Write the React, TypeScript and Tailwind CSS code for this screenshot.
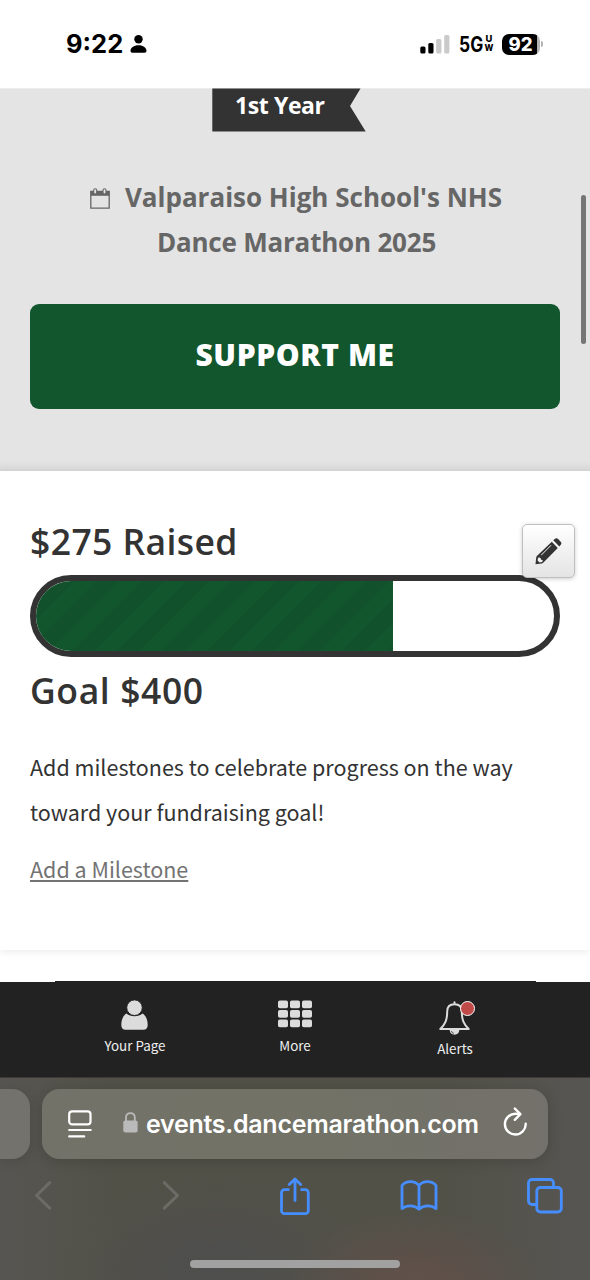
import React from 'react';

const campaign = {
  badge: '1st Year',
  event: ["Valparaiso High School's NHS", 'Dance Marathon 2025'],
  raised: 275,
  goal: 400,
};

function StatusBar() {
  return (
    <header className="flex h-[88px] shrink-0 items-center justify-between bg-white pr-[47px] pl-[66px] font-[Inter,sans-serif] text-black">
      <div className="flex items-center gap-[7px]">
        <span className="text-[25.5px] leading-none font-bold">9:22</span>
        <svg width="17" height="18" viewBox="0 0 17 18" fill="currentColor">
          <circle cx="8.5" cy="4.3" r="4.2" />
          <path d="M8.5 10.2c4.8 0 8 2.7 8 5.6 0 1.3-.7 2-2 2h-12c-1.3 0-2-.7-2-2 0-2.9 3.2-5.6 8-5.6z" />
        </svg>
      </div>
      <div className="flex items-center">
        <svg width="30" height="19" viewBox="0 0 30 19">
          <rect x="0.3" y="11.5" width="5.2" height="7" rx="1.5" />
          <rect x="8.3" y="8" width="5.2" height="10.5" rx="1.5" />
          <rect x="16.2" y="4" width="5.2" height="14.5" rx="1.5" fill="#cacaca" />
          <rect x="24.2" y="0" width="5.2" height="18.5" rx="1.5" fill="#cacaca" />
        </svg>
        <span className="ml-[9px] flex items-center">
          <span className="w-[25px] text-[21px] leading-none">
            <span className="inline-block origin-left scale-x-[0.83] font-bold">5G</span>
          </span>
          <span className="flex w-[10px] flex-col items-center text-[9.3px] leading-[8.6px] font-extrabold">
            <span>U</span>
            <span className="scale-x-90">W</span>
          </span>
        </span>
        <span className="ml-[8px] flex items-center">
          <span className="flex h-[21px] w-[38px] items-center justify-center rounded-[7px] bg-[linear-gradient(to_right,#000_35px,#b3b3b3_35px)] pr-[1px] text-[18.5px] leading-none font-extrabold text-white">
            92
          </span>
          <span className="ml-[1px] h-[6px] w-[2px] rounded-r-full bg-[#b3b3b3]" />
        </span>
      </div>
    </header>
  );
}

function CalendarIcon() {
  return (
    <svg width="20" height="22" viewBox="0 0 20 22" fill="none" className="mr-[15px] mb-px inline-block">
      <path d="M.8 3.5h18.4v16.7H.8z" stroke="#666" strokeWidth="1.3" />
      <path d="M.5 3h19v4.8H.5z" fill="#666" />
      <rect x="3.7" y=".7" width="3" height="5.3" rx="1.5" fill="#e4e4e4" stroke="#666" strokeWidth="1.1" />
      <rect x="13" y=".7" width="3" height="5.3" rx="1.5" fill="#e4e4e4" stroke="#666" strokeWidth="1.1" />
    </svg>
  );
}

function Hero() {
  return (
    <section className="relative flex h-[383px] shrink-0 flex-col items-center bg-[#e4e4e4] font-['Open_Sans',sans-serif]">
      <div className="absolute inset-x-0 bottom-0 h-[10px] bg-linear-to-t from-black/6 to-transparent" />
      <div className="h-px w-full bg-[#ededed]" />
      <div className="relative -mt-px mr-[12px] h-[43.5px] w-[154px] shrink-0">
        <svg className="absolute inset-0" width="154" height="44" viewBox="0 0 154 44">
          <path d="M.3 .5h148.200L138 18l15.700 25.500H.3z" fill="#333" />
        </svg>
        <div className="relative pl-[23px] text-[23px] leading-[34px] font-bold tracking-[-0.4px] text-white">{campaign.badge}</div>
      </div>
      <h2 className="mt-[43px] text-center text-[26px] leading-[45px] font-bold whitespace-nowrap text-[#666]">
        <span className="block pl-[2px]">
          <CalendarIcon />
          {campaign.event[0]}
        </span>
        <span className="block pl-[3px] tracking-[-0.2px]">{campaign.event[1]}</span>
      </h2>
      <button className="mt-[39.5px] h-[105px] w-[530px] shrink-0 rounded-[9px] bg-[#12562d] pb-[4px] text-[30px] font-extrabold tracking-[0.6px] text-white">
        SUPPORT ME
      </button>
    </section>
  );
}

function PencilIcon() {
  return (
    <svg width="27" height="27" viewBox="0 0 27 27" fill="#333">
      <path d="M18.300 2.200 20 .8c1-.8 2.200-.7 3.100.2l2.600 2.700c.9.9.9 2 .1 3l-1.500 1.700z" />
      <path d="m16.800 3.800 6 6.100L8.700 24.200c-.6.600-1.100 1.100-2 1.200L.5 26.200l.7-6.700c.1-.6.300-1 .7-1.400z" />
      <path d="m3 19.800 1.600-.3 1.200.9.300 1.400 1.400.3.300 1.100-1 .9-2.200.4-2-2z" fill="#f2f2f2" />
      <path d="m6.200 17.200 9.800-9.900" stroke="#f2f2f2" strokeWidth="1" />
    </svg>
  );
}

function Progress() {
  const percent = (campaign.raised / campaign.goal) * 100;

  return (
    <section className="relative h-[479px] shrink-0 bg-white px-[30px] pt-[49px] text-[#333] shadow-[0_2px_7px_rgba(0,0,0,0.08)]">
      <div className="font-['Open_Sans',sans-serif] text-[35.5px] leading-[42px] font-semibold">
        <div className="tracking-[0.4px]">${campaign.raised} Raised</div>
        <div className="mt-[13px] h-[82px] overflow-hidden rounded-full border-6 border-[#333] bg-white">
          <div
            className="h-full bg-[#12562d] bg-[linear-gradient(135deg,rgba(0,0,0,0.055)_25%,transparent_25%,transparent_50%,rgba(0,0,0,0.055)_50%,rgba(0,0,0,0.055)_75%,transparent_75%)] bg-size-[45px_45px] bg-position-[16px_0px]"
            style={{ width: `calc(${percent}% + 1px)` }}
          />
        </div>
        <div className="mt-[12px] tracking-[0.6px]">Goal ${campaign.goal}</div>
      </div>
      <button
        aria-label="Edit goal"
        className="absolute top-[53px] right-[15px] flex h-[54px] w-[53px] items-center justify-center rounded-[5px] border border-[#bfbfbf] bg-linear-to-b from-white to-[#e4e4e4] pr-px shadow-[0_1px_4px_rgba(0,0,0,0.2)]"
      >
        <PencilIcon />
      </button>
      <div className="mt-[33px] font-['Noto_Sans_CJK_SC',sans-serif] text-[21.5px] leading-[45px]">
        <p>
          Add milestones to celebrate progress on the way
          <br />
          toward your fundraising goal!
        </p>
        <a className="mt-[12px] block text-[#737373] underline decoration-[1.5px] underline-offset-[2px]">Add a Milestone</a>
      </div>
    </section>
  );
}

function PersonIcon() {
  return (
    <svg width="27" height="30" viewBox="0 0 27 30" fill="#dcdcdc">
      <path d="M5.500 13.500C2 15.500.3 20 .3 25c0 3 1.500 4.700 4.200 4.700h18c2.700 0 4.200-1.700 4.200-4.700 0-5-1.700-9.500-5.200-11.500-2 1.700-4.800 2.700-8 2.700s-6-1-8-2.700z" />
      <circle cx="13.5" cy="7.7" r="7.8" stroke="#222" strokeWidth="1" />
    </svg>
  );
}

function GridIcon() {
  return (
    <svg width="34" height="28" viewBox="0 0 34 28" fill="#dcdcdc">
      {[0, 9.5, 19].map((y) =>
        [0, 12, 24].map((x) => <rect key={`${x}-${y}`} x={x} y={y + 0.5} width="10" height="7.7" rx="1.8" />)
      )}
    </svg>
  );
}

function BellIcon() {
  return (
    <svg width="31" height="34" viewBox="0 0 31 34" fill="none">
      <path
        d="M15.500 1.200v1.500M15.500 3.200c-4.500 0-7.300 2.700-7.300 7.300 0 8.500-2 12.700-6.900 17.500h28.400c-4.900-4.800-6.900-9-6.900-17.500 0-4.600-2.800-7.300-7.300-7.300z"
        stroke="#dcdcdc"
        strokeWidth="2"
        strokeLinejoin="round"
        strokeLinecap="round"
      />
      <path d="M10.700 29h9.600c0 2.800-2 4.700-4.800 4.700s-4.800-1.900-4.800-4.700z" fill="#dcdcdc" />
      <path d="M12.500 30c.2 1.300 1 2.100 2.300 2.300" stroke="#222" strokeWidth=".8" />
    </svg>
  );
}

function AppNav() {
  return (
    <nav className="relative z-10 mt-[32px] flex h-[94.5px] shrink-0 justify-center bg-[#222] font-['Noto_Sans_CJK_SC',sans-serif] text-[13.4px] leading-[20px] text-[#eee]">
      <div className="absolute -top-[1.5px] left-[55px] h-[2px] w-[480.5px] bg-[#222]" />
      <a className="flex w-[160px] flex-col items-center pt-[18px]">
        <span className="mr-px">
          <PersonIcon />
        </span>
        <span className="mt-[5px]">Your Page</span>
      </a>
      <a className="flex w-[160px] flex-col items-center pt-[18px]">
        <GridIcon />
        <span className="mt-[7px]">More</span>
      </a>
      <a className="flex w-[160px] flex-col items-center pt-[19px]">
        <span className="relative mr-px">
          <BellIcon />
          <span className="absolute top-0 right-[-5px] size-[15px] rounded-full border-[1.5px] border-white bg-[#bf4a48]" />
        </span>
        <span className="mt-[3px]">Alerts</span>
      </a>
    </nav>
  );
}

function BrowserBar() {
  return (
    <footer className="flex grow flex-col border-t border-[#3b3a36] bg-[#53524b] bg-[radial-gradient(ellipse_130px_75px_at_415px_210px,#63504a_0%,transparent_100%),radial-gradient(ellipse_150px_90px_at_215px_190px,#4e4e4e_0%,transparent_100%),linear-gradient(to_right,#565551,#525148_20%,#525148_75%,#565552)] pt-[11px]">
      <div className="flex h-[70px] shrink-0 gap-[12px]">
        <div className="w-[30px] rounded-r-[18px] bg-[#73726d] shadow-[0_2px_12px_rgba(0,0,0,0.12)]" />
        <div className="flex w-[506px] items-center rounded-[18px] bg-linear-to-r from-[#737269] via-[#727266] to-[#73716b] pl-[26px] font-[Inter,sans-serif] text-white shadow-[0_2px_14px_rgba(0,0,0,0.16)]">
          <svg width="24" height="28" viewBox="0 0 24 28" fill="none" stroke="white" strokeWidth="2.2" strokeLinecap="round">
            <rect x="1.2" y="1.4" width="21.3" height="13" rx="3" />
            <path d="M1.200 20h21.500M1.200 26.400h15" />
          </svg>
          <svg width="15" height="21" viewBox="0 0 15 21" fill="none" className="mb-[3px] ml-[30.5px]">
            <rect x=".3" y="8.5" width="14.3" height="12" rx="2" fill="#bbbaba" />
            <path d="M3 9.500V5.800C3 3 4.700 1.200 7.400 1.200s4.400 1.800 4.400 4.600v3.700" stroke="#bbbaba" strokeWidth="1.8" />
          </svg>
          <span className="mt-px ml-[8.5px] text-[25px] leading-none font-semibold tracking-[-0.28px]">events.dancemarathon.com</span>
          <svg
            width="25"
            height="29"
            viewBox="0 0 25 29"
            fill="none"
            stroke="white"
            strokeWidth="2.4"
            strokeLinecap="round"
            strokeLinejoin="round"
            className="mb-[5px] ml-[24px]"
          >
            <path d="M22.700 16.700A10.400 10.400 0 1 1 12.300 6.700c2 0 3.300.2 4.500.5" />
            <path d="m11.800 1.500 5.600 5.700-5.600 5.600" />
          </svg>
        </div>
      </div>
      <div className="mt-[18px] flex h-[38px] shrink-0 items-center pl-[34px]">
        <svg width="18" height="29" viewBox="0 0 18 29" fill="none" stroke="#6c6b66" strokeWidth="3" strokeLinecap="round" strokeLinejoin="round">
          <path d="M15.700 1.700 2.500 14.500l13.200 12.700" />
        </svg>
        <svg width="18" height="29" viewBox="0 0 18 29" fill="none" stroke="#6c6b66" strokeWidth="3" strokeLinecap="round" strokeLinejoin="round" className="ml-[110px]">
          <path d="m2.300 1.700 13.200 12.800L2.300 27.200" />
        </svg>
        <svg width="30" height="38" viewBox="0 0 30 38" fill="none" stroke="#468eff" strokeWidth="2.8" strokeLinecap="round" strokeLinejoin="round" className="ml-[100px]">
          <path d="M9.500 12.700h-5a3 3 0 0 0-3 3v18a3 3 0 0 0 3 3h20.800a3 3 0 0 0 3-3v-18a3 3 0 0 0-3-3h-4.800" strokeLinecap="butt" />
          <path d="M15 23.500V2.500M9.300 7.500 15 1.900l5.700 5.600" />
        </svg>
        <svg width="38" height="31" viewBox="0 0 38 31" fill="none" stroke="#468eff" strokeWidth="2.8" strokeLinecap="round" strokeLinejoin="round" className="ml-[90px]">
          <path d="M19 5.500C16.500 2.700 13.800 1.700 10.500 1.700S4.300 3 2 5.400v23.200c2.300-1.800 5.200-2.700 8.500-2.700s6 1 8.500 3.200c2.500-2.200 5.200-3.200 8.500-3.200s6.200.9 8.500 2.700V5.400c-2.300-2.400-5.200-3.700-8.500-3.700S21.500 2.700 19 5.500zM19 5.500v23.600" />
        </svg>
        <svg width="36" height="36" viewBox="0 0 36 36" fill="none" stroke="#468eff" strokeWidth="2.8" strokeLinejoin="round" className="ml-[88.5px]">
          <rect x="9.8" y="9.5" width="24.5" height="24.5" rx="3.5" />
          <path d="M9.800 26.500H5a3.500 3.500 0 0 1-3.500-3.500V5A3.500 3.500 0 0 1 5 1.500h18A3.500 3.500 0 0 1 26.500 5v4.500" />
        </svg>
      </div>
      <div className="mt-[45px] h-[8px] w-[210px] self-center rounded-full bg-[#a1a1a1]" />
    </footer>
  );
}

export default function App() {
  return (
    <div className="relative flex h-[1280px] w-[590px] flex-col overflow-hidden bg-white">
      <StatusBar />
      <Hero />
      <Progress />
      <AppNav />
      <BrowserBar />
      {/* scroll indicator */}
      <div className="absolute top-[195px] right-[4px] h-[149px] w-[5px] rounded-full bg-[#757575]" />
    </div>
  );
}
